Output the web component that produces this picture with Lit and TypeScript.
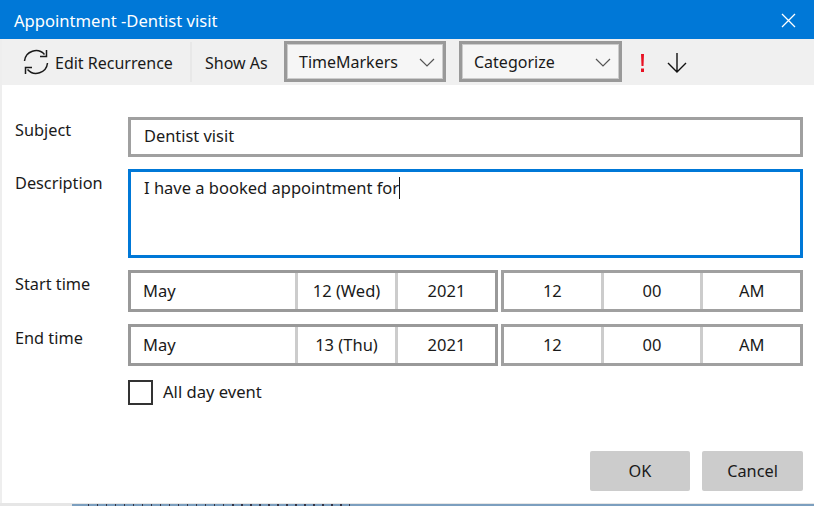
import { LitElement, html, css } from "lit";
import { customElement } from "lit/decorators.js";

@customElement("app-root")
export class AppRoot extends LitElement {
  static styles = css`
    :host { display: block; width: 814px; height: 506px; overflow: hidden; font-family: "Noto Sans", "Open Sans", sans-serif; font-size: 16px; color: #1a1a1a; background: #fff; }
    * { box-sizing: border-box; }
    .win { height: 503px; display: flex; flex-direction: column; border-left: 2px solid #eee; }
    .title { height: 39px; margin-left: -2px; padding: 1px 14px 0; background: #0078d7; color: #fff; display: flex; align-items: center; justify-content: space-between; font-size: 16.6px; }
    .close { width: 15px; height: 15px; margin-right: 4px; display: block; }
    .bar { height: 46px; background: #f0f0f0; display: flex; align-items: center; }
    .recur { width: 190px; height: 40px; display: flex; align-items: center; gap: 4px; padding-left: 19px; border-right: 2px solid #e8e8e8; }
    .recur svg { display: block; width: 30px; height: 30px; }
    .recur span { padding-top: 2px; }
    .showas { width: 92px; padding: 2px 0 0 13px; }
    .combo { height: 41px; margin-top: -2px; background: #f6f6f6; border: 3px solid #999; display: flex; align-items: center; justify-content: space-between; padding: 2px 8px 0 12px; box-shadow: 0 0 0 1px #ccc inset; }
    .c1 { width: 162px; }
    .c2 { width: 163px; margin-left: 13px; }
    .combo svg { display: block; width: 16px; height: 9px; }
    .bang { margin: 2px 0 0 17px; width: 7px; display: block; }
    .arrow { margin: 2px 0 0 21px; display: block; }
    .form { flex: 1; padding: 32px 11px 12px 13px; display: grid; grid-template-columns: 113px 1fr; row-gap: 12px; align-content: start; font-size: 16.3px; }
    .label { line-height: 24px; margin-top: 2px; }
    .label.first { margin-top: 1px; }
    .field { border: 3px solid #a0a0a0; height: 40px; display: flex; align-items: center; padding: 0 13px 4px; font-size: 16.4px; }
    .desc { height: 89px; border-color: #0078d7; align-items: flex-start; padding-top: 4px; font-size: 16.5px; }
    .caret { display: inline-block; width: 1px; height: 22px; background: #111; vertical-align: -5px; }
    .dt { display: flex; gap: 1px; height: 42px; font-size: 16.5px; }
    .grp { display: flex; border: 3px solid #999; height: 100%; }
    .g1 { width: 370px; }
    .g2 { flex: 1; border-color: #a0a0a0; margin-left: 2px; }
    .seg { display: flex; align-items: center; justify-content: center; border-left: 3px solid #ccc; padding-bottom: 2px; }
    .seg:first-child { border-left: 0; }
    .m { width: 164px; justify-content: flex-start; padding-left: 12px; }
    .d { width: 100px; }
    .y { flex: 1; }
    .t { flex: 1; }
    .all { grid-column: 2; display: flex; align-items: center; gap: 10px; height: 25px; margin-top: 2px; font-size: 16.6px; }
    .all span { padding-bottom: 3px; }
    .box { width: 25px; height: 25px; border: 2.5px solid #333; }
    .foot { display: flex; justify-content: flex-end; gap: 12px; padding: 0 11px 12px 0; font-size: 16.3px; }
    .btn { width: 100px; height: 40px; background: #ccc; border-radius: 2px; display: flex; align-items: center; justify-content: center; }
    .btn.cancel { width: 101px; }
    .strip { height: 3px; background: #e6e6e6; padding-top: 1px; padding-left: 72px; }
    .under { height: 2px; background: #7c9fbf; padding-left: 16px; }
    .ticks { width: 262px; height: 2px; background: repeating-linear-gradient(90deg, #334 0 1.5px, transparent 1.5px 9px); }
  `;
  render() {
    return html`<div class="win">
      <div class="title"><span>Appointment -Dentist visit</span>
        <svg class="close" viewBox="0 0 15 15" fill="none" stroke="#fff" stroke-width="1.3"><path d="M1 1l13 13M14 1L1 14"/></svg></div>
      <div class="bar">
        <div class="recur">
          <svg viewBox="0 0 30 30" fill="none" stroke="#1a1a1a" stroke-width="1.5"><path d="M3.500 14a11.500 11.500 0 0 1 20-6.500M25.500 3v6.500H19"/><path d="M26.500 16a11.500 11.500 0 0 1-20 6.500M4.500 27v-6.500H11"/></svg>
          <span>Edit Recurrence</span></div>
        <div class="showas">Show As</div>
        <div class="combo c1"><span>TimeMarkers</span><svg viewBox="0 0 16 9" fill="none" stroke="#555" stroke-width="1.2"><path d="M1 1l7 7 7-7"/></svg></div>
        <div class="combo c2"><span>Categorize</span><svg viewBox="0 0 16 9" fill="none" stroke="#555" stroke-width="1.2"><path d="M1 1l7 7 7-7"/></svg></div>
        <svg class="bang" width="7" height="20" viewBox="0 0 7 20" fill="#e81123"><path d="M2 1h3l-.5 12h-2zM2 15.500h3V19H2z"/></svg>
        <svg class="arrow" width="20" height="22" viewBox="0 0 20 22" fill="none" stroke="#111" stroke-width="1.4"><path d="M10 1v19M1 11l9 9 9-9"/></svg>
      </div>
      <div class="form">
        <div class="label first">Subject</div><div class="field">Dentist visit</div>
        <div class="label">Description</div><div class="field desc"><span>I have a booked appointment for<span class="caret"></span></span></div>
        <div class="label">Start time</div>
        <div class="dt"><div class="grp g1"><div class="seg m">May</div><div class="seg d">12 (Wed)</div><div class="seg y">2021</div></div>
          <div class="grp g2"><div class="seg t">12</div><div class="seg t">00</div><div class="seg t">AM</div></div></div>
        <div class="label">End time</div>
        <div class="dt"><div class="grp g1"><div class="seg m">May</div><div class="seg d">13 (Thu)</div><div class="seg y">2021</div></div>
          <div class="grp g2"><div class="seg t">12</div><div class="seg t">00</div><div class="seg t">AM</div></div></div>
        <div class="all"><div class="box"></div><span>All day event</span></div>
      </div>
      <div class="foot"><div class="btn">OK</div><div class="btn cancel">Cancel</div></div>
    </div>
    <div class="strip"><div class="under"><div class="ticks"></div></div></div>`;
  }
}
